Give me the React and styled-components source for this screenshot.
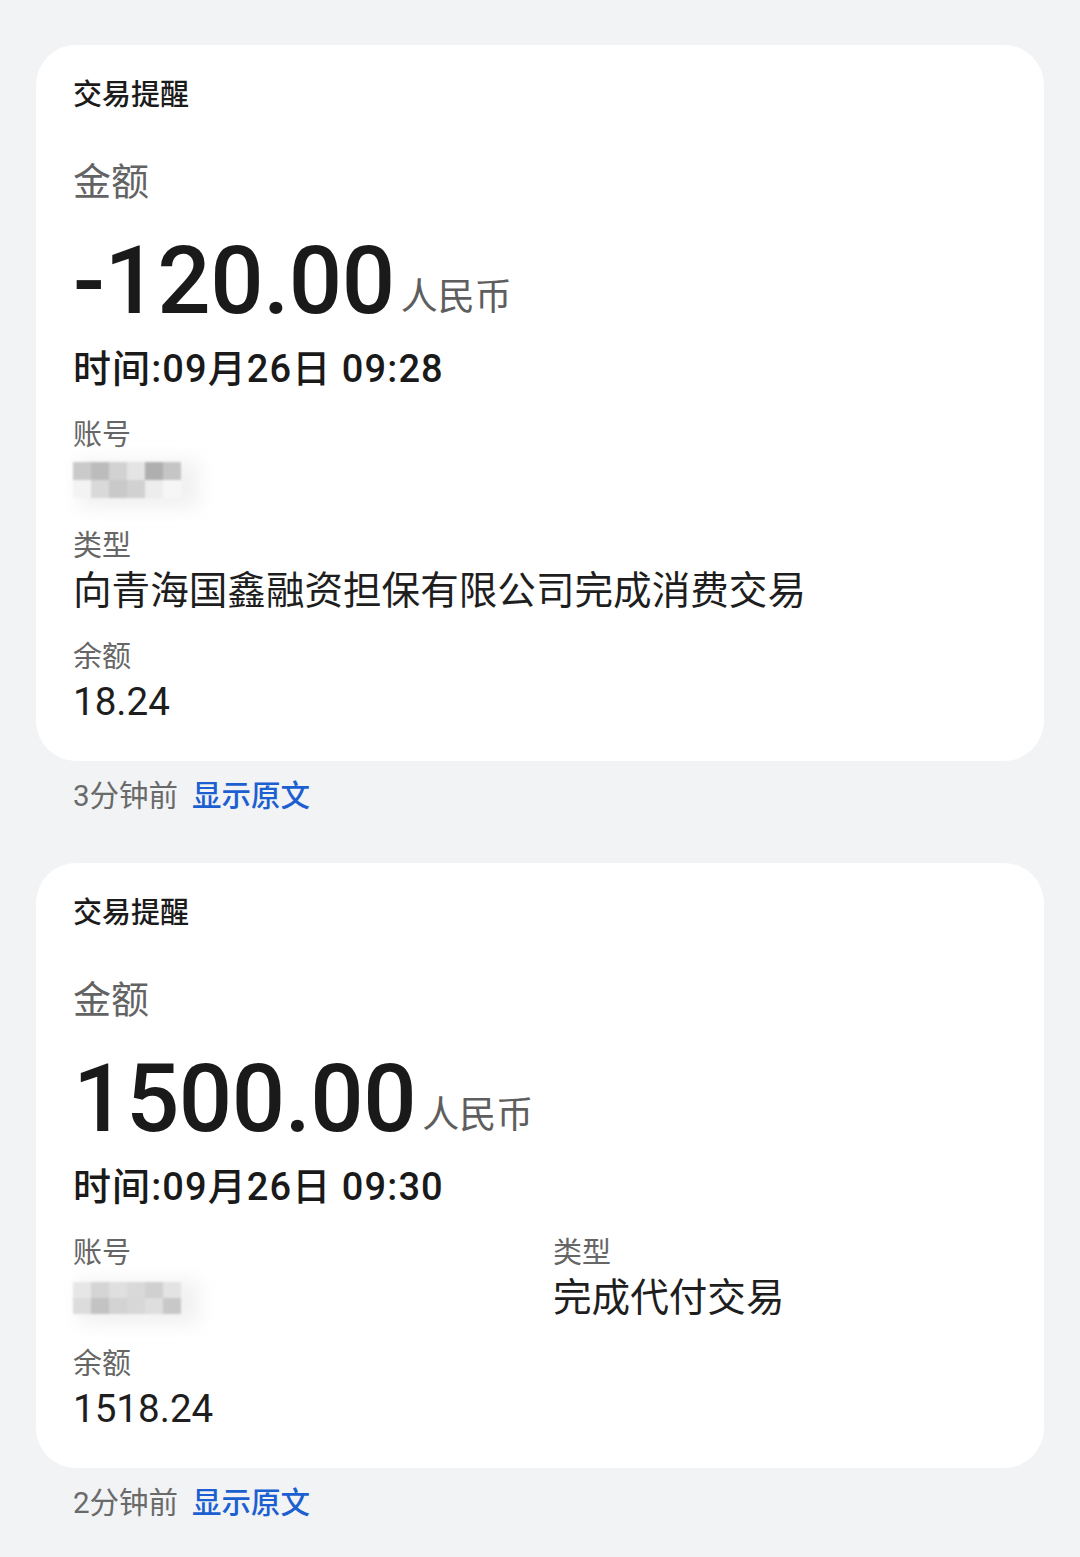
import React from "react";
import styled, { createGlobalStyle } from "styled-components";

const GlobalStyle = createGlobalStyle`
  html, body {
    margin: 0;
    padding: 0;
    background: #f1f3f5;
  }
  body {
    font-family: Roboto, "Noto Sans CJK SC", sans-serif;
    -webkit-font-smoothing: antialiased;
  }
`;

const Page = styled.div`
  padding: 45px 36px 36px;
  display: flex;
  flex-direction: column;
`;

const Card = styled.div`
  background: #ffffff;
  border-radius: 40px;
  padding: 30px 37px 34px;
  display: flex;
  flex-direction: column;
`;

const Title = styled.div`
  font-size: 29px;
  line-height: 40px;
  font-weight: 500;
  color: #1b1b1b;
`;

const AmountLabel = styled.div`
  margin-top: 41px;
  font-size: 38px;
  line-height: 52px;
  color: #636363;
`;

const Amount = styled.div`
  margin-top: 23px;
  height: 100px;
  line-height: 100px;
  white-space: nowrap;
  color: #1a1a1a;
`;

const Figure = styled.span`
  font-size: 94px;
  font-weight: 500;
  letter-spacing: -0.5px;
`;

const Unit = styled.span`
  margin-left: 6px;
  font-size: 37px;
  color: #5e5e5e;
  vertical-align: 3px;
`;

const Time = styled.div`
  margin-top: 13px;
  font-size: 38px;
  line-height: 50px;
  font-weight: 500;
  color: #1a1a1a;
  letter-spacing: 1.1px;
`;

const Fields = styled.div`
  margin-top: 21px;
  display: grid;
  grid-template-columns: ${p => (p.$split ? "480px 1fr" : "1fr")};
  row-gap: 21px;
`;

const Field = styled.div`
  display: flex;
  flex-direction: column;
`;

const Label = styled.div`
  font-size: 29px;
  line-height: 40px;
  color: #666666;
`;

const Value = styled.div`
  font-size: 38.6px;
  line-height: 50px;
  height: 50px;
  color: #1e1e1e;
  white-space: nowrap;
  display: flex;
  align-items: center;
`;

const Mosaic = styled.div`
  display: grid;
  grid-template-columns: repeat(6, 18px);
  grid-auto-rows: ${p => p.$row}px;
  filter: blur(0.8px);
  box-shadow: 12px 4px 18px 6px rgba(235, 235, 235, 0.7);
`;

const Cell = styled.div`
  background: ${p => p.$c};
`;

const Footer = styled.div`
  margin: 15px 0 47px;
  padding-left: 37px;
  display: flex;
  gap: 14px;
  font-size: 29.5px;
  line-height: 40px;
`;

const Ago = styled.span`
  color: #6a6a6a;
`;

const Original = styled.span`
  color: #1c5fd1;
  font-weight: 500;
`;

const mosaicA = [
  "#cacaca", "#bcbcbc", "#d2d2d2", "#e4e4e4", "#afafaf", "#c5c5c5",
  "#f3f3f3", "#d9d9d9", "#c9c9c9", "#d1d1d1", "#ededed", "#f6f6f6",
];

const mosaicB = [
  "#e6e6e6", "#d5d5d5", "#dfdfdf", "#d9d9d9", "#d0d0d0", "#e3e3e3",
  "#dcdcdc", "#c3c3c3", "#d3d3d3", "#d7d7d7", "#dedede", "#c8c8c8",
];

const Blur = ({ cells, row }) => (
  <Mosaic $row={row}>
    {cells.map((c, i) => (
      <Cell key={i} $c={c} />
    ))}
  </Mosaic>
);

const Notice = ({ amount, time, balance, type, cells, row, split, ago }) => (
  <>
    <Card>
      <Title>交易提醒</Title>
      <AmountLabel>金额</AmountLabel>
      <Amount>
        <Figure>{amount}</Figure>
        <Unit>人民币</Unit>
      </Amount>
      <Time>时间:{time}</Time>
      <Fields $split={split}>
        <Field>
          <Label>账号</Label>
          <Value>
            <Blur cells={cells} row={row} />
          </Value>
        </Field>
        <Field>
          <Label>类型</Label>
          <Value>{type}</Value>
        </Field>
        <Field>
          <Label>余额</Label>
          <Value>{balance}</Value>
        </Field>
      </Fields>
    </Card>
    <Footer>
      <Ago>{ago}</Ago>
      <Original>显示原文</Original>
    </Footer>
  </>
);

export default function App() {
  return (
    <>
      <GlobalStyle />
      <Page>
        <Notice
          amount="-120.00"
          time="09月26日 09:28"
          type="向青海国鑫融资担保有限公司完成消费交易"
          balance="18.24"
          cells={mosaicA}
          row={18}
          ago="3分钟前"
        />
        <Notice
          amount="1500.00"
          time="09月26日 09:30"
          type="完成代付交易"
          balance="1518.24"
          cells={mosaicB}
          row={16}
          split
          ago="2分钟前"
        />
      </Page>
    </>
  );
}
